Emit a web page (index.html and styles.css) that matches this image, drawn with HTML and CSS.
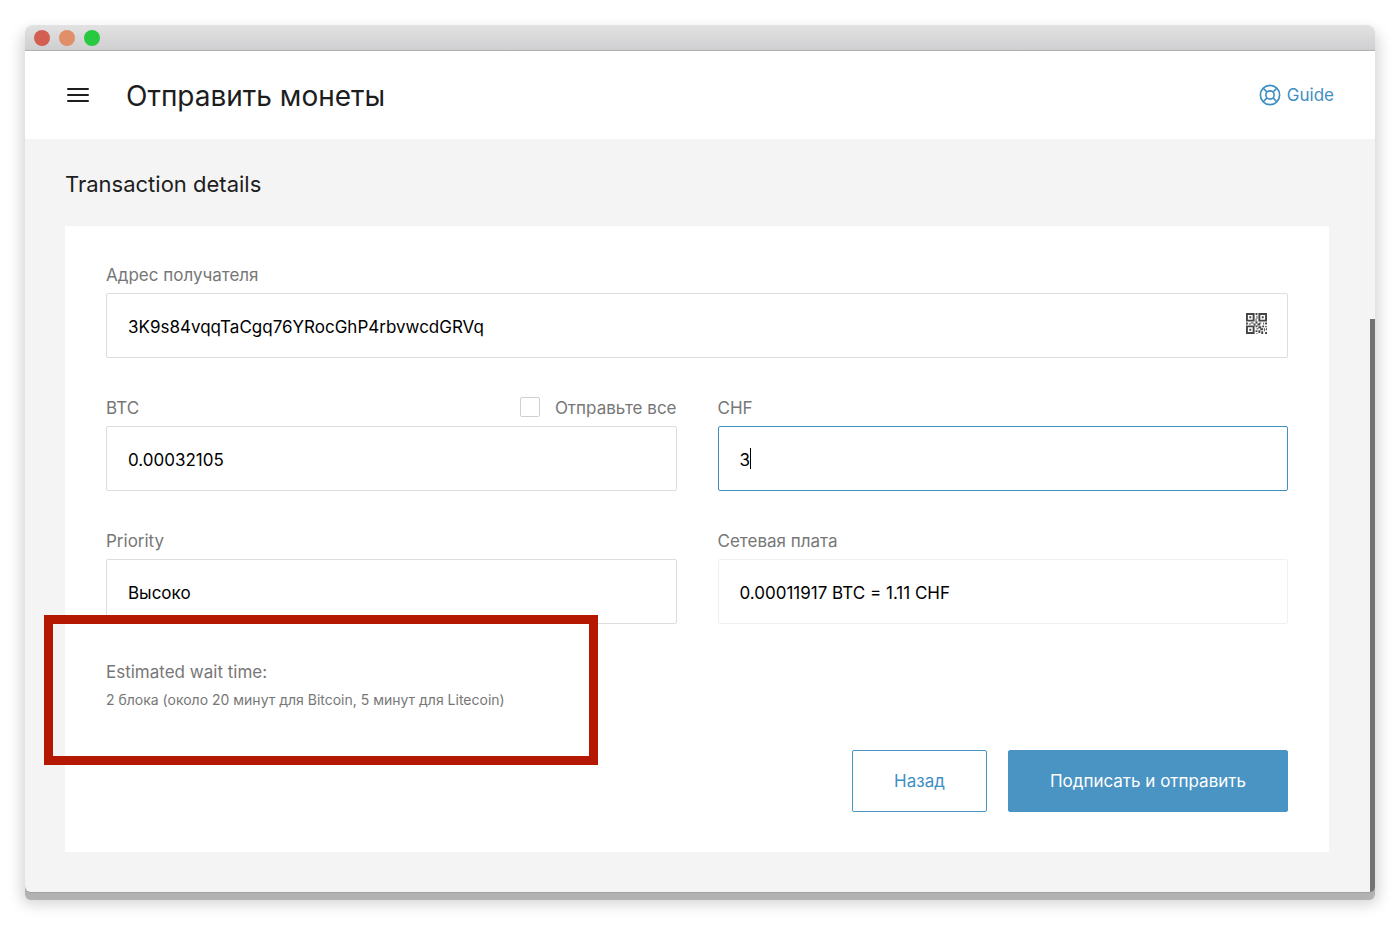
FILE: index.html
```html
<!DOCTYPE html>
<html lang="ru">
<head>
    <meta charset="UTF-8">
    <meta name="viewport" content="width=device-width, initial-scale=1.0">
    <title>Отправить монеты</title>
    <link rel="stylesheet" href="styles.css">
</head>
<body>

    <div class="window">
        <div class="titlebar">
            <span class="dot red"></span>
            <span class="dot orange"></span>
            <span class="dot green"></span>
        </div>

        <header class="header">
            <button class="menu-btn" type="button" aria-label="Menu">
                <svg width="22" height="16" viewBox="0 0 22 16" stroke="#1d1d1d" stroke-width="2" stroke-linecap="round">
                    <path d="M1 2h20M1 8h20M1 14h20"/>
                </svg>
            </button>
            <h1>Отправить монеты</h1>
            <a class="guide" href="#">
                <svg width="22" height="22" viewBox="0 0 24 24" fill="none" stroke="currentColor" stroke-width="1.8">
                    <circle cx="12" cy="12" r="10.5"/>
                    <circle cx="12" cy="12" r="4.5"/>
                    <path d="M4.6 4.6l4.2 4.2M15.2 15.2l4.2 4.2M15.2 8.8l4.2-4.2M4.6 19.4l4.2-4.2"/>
                </svg>
                Guide
            </a>
        </header>

        <main class="content">
            <h2>Transaction details</h2>

            <form class="card">
                <div class="field">
                    <label for="address">Адрес получателя</label>
                    <div class="input-wrap">
                        <input id="address" type="text" value="3K9s84vqqTaCgq76YRocGhP4rbvwcdGRVq">
                        <button class="qr-btn" type="button" aria-label="QR">
                            <svg width="21" height="21" viewBox="0 0 22 22" fill="#444">
                                <path fill-rule="evenodd" d="M0 0h9v9H0zM2 2v5h5V2zM13 0h9v9h-9zM15 2v5h5V2zM0 13h9v9H0zM2 15v5h5v-5z"/>
                                <path d="M3.500 3.500h2v2h-2zM16.500 3.500h2v2h-2zM3.500 16.500h2v2h-2z"/>
                                <path d="M10 0h2v2h-2zM11 3h1v3h-1zM10 6h1v3h-1zM0 10h2v2H0zM3 11h2v1H3zM5 10h3v1H5zM8 11h2v2H8zM10 9h2v2h-2zM12 11h3v2h-3zM14 10h2v1h-2zM18 10h1v2h-1zM20 10h2v2h-2zM10 13h2v2h-2zM13 14h3v2h-3zM17 13h2v2h-2zM20 14h2v1h-2zM11 16h2v1h-2zM15 16h3v2h-3zM19 16h1v3h-1zM21 16h1v2h-1zM10 18h2v2h-2zM13 18h2v3h-2zM16 19h2v3h-2zM11 21h1v1h-1zM20 20h2v2h-2z"/>
                            </svg>
                        </button>
                    </div>
                </div>

                <div class="row">
                    <div class="field">
                        <div class="label-row">
                            <label for="amount">BTC</label>
                            <label class="send-all"><input type="checkbox">Отправьте все</label>
                        </div>
                        <input id="amount" type="text" value="0.00032105">
                    </div>
                    <div class="field">
                        <label for="fiat">CHF</label>
                        <div class="input-wrap active">
                            <input id="fiat" type="text" value="3">
                            <span class="caret"></span>
                        </div>
                    </div>
                </div>

                <div class="row">
                    <div class="field">
                        <label for="priority">Priority</label>
                        <select id="priority">
                            <option>Высоко</option>
                        </select>
                    </div>
                    <div class="field">
                        <label for="fee">Сетевая плата</label>
                        <input id="fee" class="readonly" type="text" value="0.00011917 BTC = 1.11 CHF" readonly>
                    </div>
                </div>

                <div class="wait">
                    <p>Estimated wait time:</p>
                    <p class="small">2 блока (около 20 минут для Bitcoin, 5 минут для Litecoin)</p>
                    <div class="highlight"></div>
                </div>

                <div class="buttons">
                    <button class="btn" type="button">Назад</button>
                    <button class="btn primary" type="button">Подписать и отправить</button>
                </div>
            </form>
        </main>

        <div class="scrollbar"></div>
    </div>

</body>
</html>
```

FILE: styles.css
```css
* {
    box-sizing: border-box;
}

body {
    margin: 0;
    padding: 25px;
    background-color: #ffffff;
    font-family: Inter, "Liberation Sans", sans-serif;
    font-size: 17px;
    line-height: 26px;
    color: #1d1d1d;
}

h1, h2, p {
    margin: 0;
    font-weight: 400;
}

.window {
    position: relative;
    border-radius: 8px 8px 6px 6px;
    background-color: #f4f4f4;
    box-shadow: 0 1px 0 #a2a2a2, 0 8px 0 #b2b2b2, 0 9px 14px 4px rgba(0, 0, 0, 0.16);
}

.titlebar {
    display: flex;
    align-items: center;
    gap: 9px;
    height: 26px;
    padding: 0 9px;
    border-bottom: 1px solid #b0b0b0;
    border-radius: 8px 8px 0 0;
    background: linear-gradient(#e2e2e2, #cfcfd1);
}

.dot {
    width: 16px;
    height: 16px;
    border-radius: 50%;
}

.red {
    background-color: #d25f52;
}

.orange {
    background-color: #e08f68;
}

.green {
    background-color: #28c940;
}

.header {
    display: flex;
    align-items: center;
    height: 88px;
    padding: 0 41px 0 42px;
    background-color: #ffffff;
}

button {
    font: inherit;
    cursor: pointer;
}

.menu-btn,
.qr-btn {
    display: flex;
    padding: 0;
    border: none;
    background: none;
}

h1 {
    margin-left: 37px;
    padding-top: 2px;
    font-size: 28px;
    line-height: 40px;
}

.guide {
    display: flex;
    align-items: center;
    gap: 6px;
    margin-left: auto;
    color: #3f8fc3;
    text-decoration: none;
}

.content {
    padding: 25px 46px 40px 40px;
}

h2 {
    font-size: 22px;
    line-height: 40px;
}

.card {
    display: flex;
    flex-direction: column;
    gap: 42px;
    margin-top: 22px;
    padding: 41px 41px 40px;
    background-color: #ffffff;
}

.row {
    display: flex;
    gap: 41px;
}

.row .field {
    flex: 1;
}

.field {
    display: flex;
    flex-direction: column;
    color: #777777;
}

label {
    height: 26px;
    line-height: 16px;
}

.label-row {
    display: flex;
    justify-content: space-between;
}

.send-all {
    display: flex;
    gap: 15px;
}

.send-all input {
    appearance: none;
    width: 20px;
    height: 20px;
    margin: -3px 0 0;
    border: 1px solid #d0d0d0;
    border-radius: 2px;
    background-color: #ffffff;
}

input[type="text"],
select {
    appearance: none;
    width: 100%;
    height: 65px;
    padding: 2px 21px 0;
    border: 1px solid #dddddd;
    border-radius: 2px;
    outline: none;
    background-color: #ffffff;
    font: inherit;
    color: #000000;
}

.readonly[type="text"] {
    border-color: #f0f0f0;
}

.input-wrap {
    position: relative;
}

.active input[type="text"] {
    border-color: #3f8fc3;
}

.qr-btn {
    position: absolute;
    top: 20px;
    right: 21px;
}

.caret {
    position: absolute;
    top: 22px;
    left: 32px;
    width: 1px;
    height: 21px;
    background-color: #000000;
}

.wait {
    position: relative;
    margin-top: -7px;
    color: #777777;
}

.small {
    font-size: 14px;
    line-height: 30px;
}

/* red frame drawn over the form */
.highlight {
    position: absolute;
    top: -44px;
    left: -62px;
    width: 554px;
    height: 150px;
    border: 9px solid #b51800;
    pointer-events: none;
}

.buttons {
    display: flex;
    justify-content: flex-end;
    gap: 21px;
    margin-top: -7px;
}

.btn {
    height: 62px;
    padding: 0 41px;
    border: 1px solid #4a94c4;
    border-radius: 2px;
    background-color: #ffffff;
    color: #3f8fc3;
}

.primary {
    background-color: #4a94c4;
    color: #ffffff;
}

.scrollbar {
    position: absolute;
    top: 294px;
    right: 0;
    bottom: 0;
    width: 5px;
    border-radius: 0 0 5px 0;
    background-color: #737373;
}
```
